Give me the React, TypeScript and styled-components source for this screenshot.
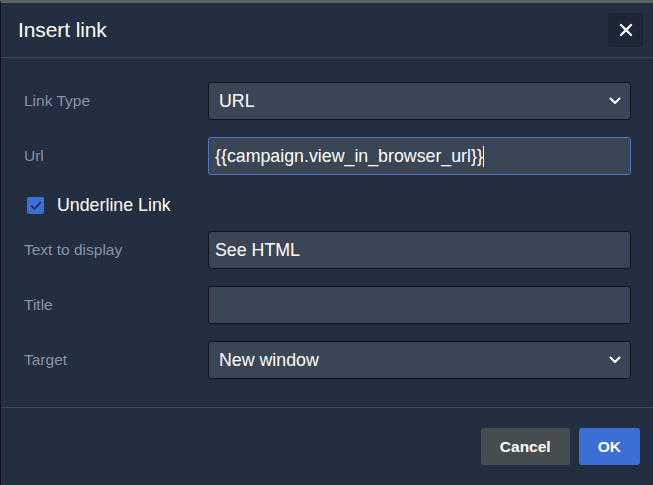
import * as React from "react";
import styled, { createGlobalStyle } from "styled-components";

const GlobalStyle = createGlobalStyle`
  html, body {
    margin: 0;
    padding: 0;
    background: #232e40;
  }
  * {
    box-sizing: border-box;
  }
`;

const Dialog = styled.div`
  width: 653px;
  height: 485px;
  display: flex;
  flex-direction: column;
  background: #232e40;
  border-top: 3px solid #5d6065;
  border-left: 1px solid #10151d;
  font-family: "Liberation Sans", Arial, sans-serif;
  color: #ffffff;
`;

const Header = styled.header`
  height: 55px;
  flex-shrink: 0;
  display: flex;
  align-items: center;
  justify-content: space-between;
  padding: 0 10px 0 17px;
  border-bottom: 1px solid #3a4859;
`;

const Title = styled.h1`
  margin: 0;
  font-size: 21px;
  font-weight: 400;
  letter-spacing: -0.1px;
`;

const CloseButton = styled.button`
  width: 35px;
  height: 34px;
  border: none;
  border-radius: 2px;
  background: #1c2636;
  color: #ffffff;
  display: flex;
  align-items: center;
  justify-content: center;
  padding: 0;
  cursor: pointer;
`;

const Body = styled.div`
  flex: 1;
  display: flex;
  flex-direction: column;
  gap: 17px;
  padding: 24px 22px 27px 23px;
  border-bottom: 1px solid #3a4859;
`;

const Row = styled.div`
  display: grid;
  grid-template-columns: 184px 1fr;
  align-items: center;
  height: 38px;
`;

const Label = styled.label`
  font-size: 15.5px;
  color: #8a94a3;
`;

const fieldBase = `
  width: 100%;
  height: 38px;
  border-radius: 3px;
  background: #3a4556;
  color: #ffffff;
  font-family: "Liberation Sans", Arial, sans-serif;
  font-size: 17.8px;
  outline: none;
`;

const InputWrap = styled.div`
  position: relative;
  width: 100%;
`;

const TextInput = styled.input<{ $focused?: boolean }>`
  ${fieldBase}
  padding: 0 6px;
  border: 1px solid ${(p) => (p.$focused ? "#4b74c9" : "#0f141c")};
  caret-color: #ffffff;
`;

const Caret = styled.span<{ $left: number }>`
  position: absolute;
  top: 9px;
  left: ${(p) => p.$left}px;
  width: 1px;
  height: 21px;
  background: #ffffff;
  pointer-events: none;
`;

const Select = styled.select`
  ${fieldBase}
  appearance: none;
  -webkit-appearance: none;
  padding: 0 30px 0 10px;
  border: 1px solid #0f141c;
`;

const Chevron = styled.svg`
  position: absolute;
  right: 10px;
  top: 50%;
  transform: translateY(-50%);
  pointer-events: none;
`;

const CheckRow = styled.label`
  display: flex;
  align-items: center;
  gap: 13px;
  height: 22px;
  padding: 5px 0 0 3px;
  font-size: 17.8px;
  color: #ffffff;
`;

const CheckBox = styled.span`
  width: 17px;
  height: 17px;
  border-radius: 2px;
  background: #3b6fd6;
  display: flex;
  align-items: center;
  justify-content: center;
`;

const Footer = styled.footer`
  display: flex;
  justify-content: flex-end;
  gap: 9px;
  padding: 20px 13px 0 0;
  height: 77px;
`;

const Button = styled.button<{ $primary?: boolean }>`
  height: 37px;
  padding: 0 19px;
  min-width: ${(p) => (p.$primary ? "60px" : "89px")};
  border: none;
  border-radius: 3px;
  background: ${(p) => (p.$primary ? "#3b6fd6" : "#464d50")};
  color: #ffffff;
  font-family: "Liberation Sans", Arial, sans-serif;
  font-size: 15.5px;
  font-weight: 700;
  cursor: pointer;
`;

function ChevronIcon() {
  return (
    <Chevron width="12" height="8" viewBox="0 0 12 8">
      <path d="M1.5 1.5 L6 6 L10.5 1.5" fill="none" stroke="#ffffff" strokeWidth="2" strokeLinecap="round" strokeLinejoin="round" />
    </Chevron>
  );
}

export default function App() {
  return (
    <>
      <GlobalStyle />
      <Dialog>
        <Header>
          <Title>Insert link</Title>
          <CloseButton aria-label="Close">
            <svg width="14" height="14" viewBox="0 0 14 14">
              <path d="M2 2 L12 12 M12 2 L2 12" stroke="#ffffff" strokeWidth="2.4" strokeLinecap="round" />
            </svg>
          </CloseButton>
        </Header>
        <Body>
          <Row>
            <Label>Link Type</Label>
            <InputWrap>
              <Select defaultValue="url">
                <option value="url">URL</option>
                <option value="email">Email</option>
              </Select>
              <ChevronIcon />
            </InputWrap>
          </Row>
          <Row>
            <Label>Url</Label>
            <InputWrap>
              <TextInput $focused defaultValue="{{campaign.view_in_browser_url}}" />
              <Caret $left={275} />
            </InputWrap>
          </Row>
          <CheckRow>
            <CheckBox>
              <svg width="12" height="10" viewBox="0 0 12 10">
                <path d="M1.5 5 L4.5 8 L10.5 1.5" fill="none" stroke="#1d2a40" strokeWidth="1.6" strokeLinecap="round" strokeLinejoin="round" />
              </svg>
            </CheckBox>
            Underline Link
          </CheckRow>
          <Row>
            <Label>Text to display</Label>
            <TextInput defaultValue="See HTML" />
          </Row>
          <Row>
            <Label>Title</Label>
            <TextInput defaultValue="" />
          </Row>
          <Row>
            <Label>Target</Label>
            <InputWrap>
              <Select defaultValue="new">
                <option value="new">New window</option>
                <option value="same">Same window</option>
              </Select>
              <ChevronIcon />
            </InputWrap>
          </Row>
        </Body>
        <Footer>
          <Button>Cancel</Button>
          <Button $primary>OK</Button>
        </Footer>
      </Dialog>
    </>
  );
}
